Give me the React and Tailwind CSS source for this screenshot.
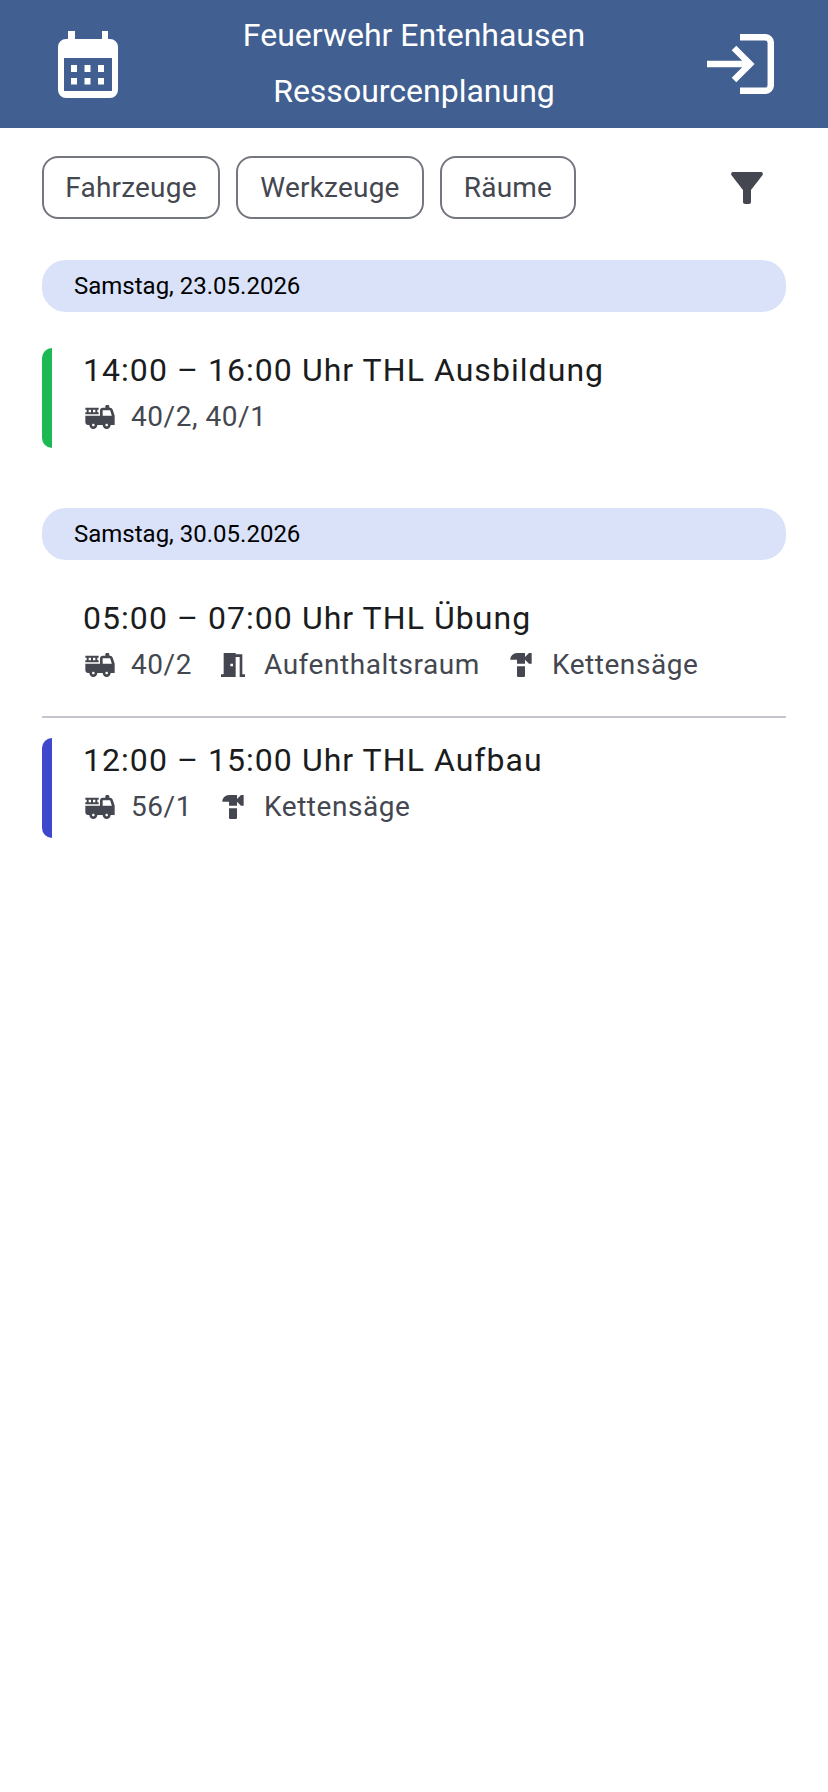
import React from "react";
import { MdFireTruck, MdMeetingRoom, MdHardware, MdFilterAlt } from "react-icons/md";

const CalendarIcon = () => (
  <svg width="60" height="67" viewBox="0 0 60 67" fill="none">
    <path d="M10 0h7v8h27V0h6v8h2a8 8 0 0 1 8 8v43a8 8 0 0 1-8 8H8a8 8 0 0 1-8-8V16a8 8 0 0 1 8-8h2z" fill="#fff" />
    <rect x="6" y="27" width="48" height="33" fill="#415f91" />
    <g fill="#fff">
      <rect x="13" y="34" width="6" height="7" />
      <rect x="26.5" y="34" width="6" height="7" />
      <rect x="40" y="34" width="6" height="7" />
      <rect x="13" y="47" width="6" height="6.5" />
      <rect x="26.5" y="47" width="6" height="6.5" />
      <rect x="40" y="47" width="6" height="6.5" />
    </g>
  </svg>
);

const LoginIcon = () => (
  <svg width="67" height="60" viewBox="0 0 67 60" fill="none" stroke="#fff" strokeWidth="6.5">
    <path d="M33 3.2h25a5.8 5.8 0 0 1 5.8 5.8v42a5.8 5.8 0 0 1-5.8 5.8H33" />
    <path d="M0 30h44M27 14l16 16-16 16" />
  </svg>
);

const Chip = ({ label, className }) => (
  <button className={`h-[63px] rounded-[16px] border-2 border-[#74777f] bg-white text-[28px] tracking-[0.2px] text-[#44474f] ${className}`}>
    {label}
  </button>
);

const DateBar = ({ children, className }) => (
  <div className={`h-[52px] rounded-[24px] bg-[#d9e2f9] pl-[32px] text-[24px] leading-[52px] text-black ${className}`}>{children}</div>
);

const Resource = ({ icon: Icon, label }) => (
  <span className="flex items-center gap-[15px]">
    <Icon size={32} className="text-[#44474f]" />
    <span>{label}</span>
  </span>
);

const EventRow = ({ color, title, resources }) => (
  <div className="flex h-[100px]">
    <div className={`w-[10px] rounded-l-[10px] ${color}`} />
    <div className="pl-[31px]">
      <div className="mt-[1px] text-[32px] leading-[42px] tracking-[1.05px] text-[#1a1c20]">{title}</div>
      <div className="mt-[5px] flex gap-[25px] pl-[1px] text-[28px] leading-[42px] tracking-[0.55px] text-[#44474f]">
        {resources.map((r) => (
          <Resource key={r.label} icon={r.icon} label={r.label} />
        ))}
      </div>
    </div>
  </div>
);

export default function App() {
  return (
    <div className="min-h-[1792px] bg-white font-['Roboto',sans-serif]">
      <header className="flex h-[128px] items-center justify-between bg-[#415f91] pl-[58px] pr-[54px] text-white">
        <CalendarIcon />
        <div className="-mt-[2px] pl-[3px] text-center text-[32px] leading-[56px]">
          <div>Feuerwehr Entenhausen</div>
          <div>Ressourcenplanung</div>
        </div>
        <LoginIcon />
      </header>

      <main className="px-[42px]">
        <div className="mt-[28px] flex items-center gap-[16px]">
          <Chip label="Fahrzeuge" className="w-[178px]" />
          <Chip label="Werkzeuge" className="w-[188px]" />
          <Chip label="Räume" className="w-[136px]" />
          <MdFilterAlt size={48} className="ml-auto mr-[15px] text-[#44474f]" />
        </div>

        <DateBar className="mt-[41px]">Samstag, 23.05.2026</DateBar>
        <div className="mt-[36px]">
          <EventRow
            color="bg-[#1db954]"
            title="14:00 – 16:00 Uhr THL Ausbildung"
            resources={[{ icon: MdFireTruck, label: "40/2, 40/1" }]}
          />
        </div>

        <DateBar className="mt-[60px]">Samstag, 30.05.2026</DateBar>
        <div className="mt-[36px]">
          <EventRow
            color="bg-transparent"
            title="05:00 – 07:00 Uhr THL Übung"
            resources={[
              { icon: MdFireTruck, label: "40/2" },
              { icon: MdMeetingRoom, label: "Aufenthaltsraum" },
              { icon: MdHardware, label: "Kettensäge" },
            ]}
          />
        </div>
        <div className="mt-[20px] h-[2px] bg-[#c5c5d0]" />
        <div className="mt-[20px]">
          <EventRow
            color="bg-[#3f48cc]"
            title="12:00 – 15:00 Uhr THL Aufbau"
            resources={[
              { icon: MdFireTruck, label: "56/1" },
              { icon: MdHardware, label: "Kettensäge" },
            ]}
          />
        </div>
      </main>
    </div>
  );
}
